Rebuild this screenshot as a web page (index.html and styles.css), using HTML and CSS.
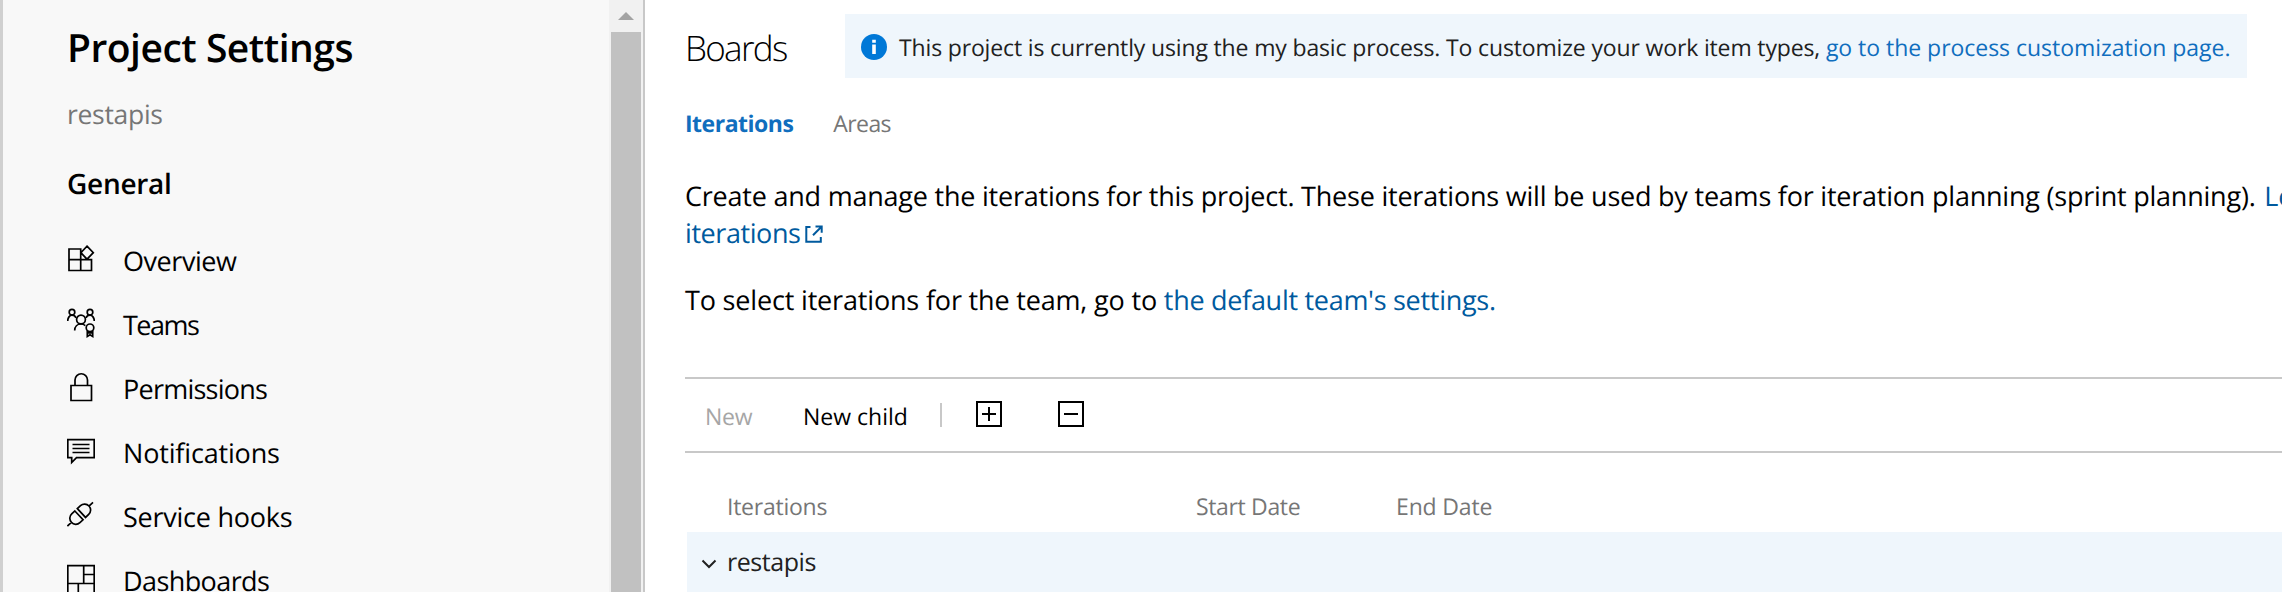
FILE: index.html
```html
<!DOCTYPE html>
<html lang="en">
<head>
<meta charset="utf-8">
<title>Project Settings - Boards</title>
<link rel="stylesheet" href="styles.css">
</head>
<body>
<div class="app">
  <aside class="sidebar">
    <h1 class="title">Project Settings</h1>
    <div class="project">restapis</div>
    <h2 class="group">General</h2>
    <nav class="nav">
      <a class="item overview">
        <svg class="icon" viewBox="0 0 28 32"><path d="M2 5h11.7v21.5H2zM2 15.7h22.5v10.8H13.7M20 2.2l6.3 6.5-6.3 6.5-6.1-6.5z"/></svg>
        <span>Overview</span></a>
      <a class="item teams">
        <svg class="icon" viewBox="0 0 28 32"><circle cx="5" cy="4.2" r="2.8"/><circle cx="23" cy="4.2" r="2.8"/><path d="M.7 13c0-3.300 2-5.800 4.300-5.800 1.800 0 3.300 1 4 2.600M27.300 13c0-3.300-2-5.800-4.300-5.800-1.800 0-3.300 1-4 2.600M7.700 22.500c0-3.800 2.600-6.500 6.300-6.500 1.700 0 3.200.6 4.300 1.600"/><circle cx="14" cy="11.500" r="4.400"/><circle cx="23" cy="19.800" r="3.800"/><path d="M20.300 22.500v6l2.700-1.800 2.700 1.800v-6M20.500 24.800h5"/></svg>
        <span>Teams</span></a>
      <a class="item permissions">
        <svg class="icon" viewBox="0 0 28 32"><path d="M4 13.500h20.500v15H4zM8 13.500V8a6.200 6.200 0 0 1 12.500 0v5.500"/></svg>
        <span>Permissions</span></a>
      <a class="item notifications">
        <svg class="icon" viewBox="0 0 28 32"><path d="M.8 3.700h26.400v18H9.500L4.700 26.500v-4.800H.8zM5.500 8.500h17M5.500 12.500h17M5.500 16.500h17"/></svg>
        <span>Notifications</span></a>
      <a class="item hooks">
        <svg class="icon" viewBox="0 0 28 32"><g transform="translate(13.200 14.200) rotate(-43)"><path d="M-1.700-6v12H-6a6 6 0 0 1 0-12zM1.700-6v12H6A6 6 0 0 0 6-6zM-17.500 0h5.500M12 0h5.500"/></g></svg>
        <span>Service hooks</span></a>
      <a class="item dashboards">
        <svg class="icon" viewBox="0 0 28 32"><path d="M.8 31V1.700h26.400V31M.8 19.500h26.400M16.700 1.700v17.800M16.700 10.500h10.500M11.300 19.500V31"/></svg>
        <span>Dashboards</span></a>
    </nav>
  </aside>
  <div class="scrollbar">
    <svg class="arrow" viewBox="0 0 16 8"><path d="M8 0l8 8H0z"/></svg>
    <div class="thumb"></div>
  </div>
  <main class="main">
    <header class="header">
      <h2 class="boards">Boards</h2>
      <div class="banner">
        <svg class="info" viewBox="0 0 26 26"><circle cx="13" cy="13" r="13"/><path d="M11.200 10.500h3.600V20h-3.600zM11.200 5.700h3.600v3h-3.600z"/></svg>
        <p class="banner-text">This project is currently using the my basic process. To customize your work item types, <a class="banner-link">go to the process customization page.</a></p>
      </div>
    </header>
    <div class="tabs"><a class="tab active">Iterations</a><a class="tab">Areas</a></div>
    <p class="copy intro"><span class="intro-text">Create and manage the iterations for this project. These iterations will be used by teams for iteration planning (sprint planning).</span> <a class="link">Learn</a><br><a class="link tight">iterations</a><svg class="external" viewBox="0 0 18 18"><path d="M5.500 2H1.300v14.700h14.500V12M10.500 1.500h6.200v6.300M16.200 2L8 10.200"/></svg></p>
    <p class="copy select">To select iterations for the team, go to <a class="link">the default team's settings.</a></p>
    <div class="toolbar">
      <span class="new">New</span>
      <span class="child">New child</span>
      <i class="separator"></i>
      <svg class="box" viewBox="0 0 26 26"><path d="M1 1h24v24H1zM6 13h14M13 6v14"/></svg>
      <svg class="box" viewBox="0 0 26 26"><path d="M1 1h24v24H1zM6 13h14"/></svg>
    </div>
    <div class="columns"><span class="col-name">Iterations</span><span class="col-start">Start Date</span><span class="col-end">End Date</span></div>
    <div class="row">
      <svg class="chevron" viewBox="0 0 16 10"><path d="M1.500 1.500L8 8l6.500-6.500"/></svg>
      <span>restapis</span>
    </div>
  </main>
</div>
</body>
</html>
```
FILE: styles.css
```css
* { box-sizing: border-box; margin: 0; padding: 0; }
body { font-family: "Open Sans", "Noto Sans", sans-serif; color: #000; background: #fff; overflow: hidden; text-rendering: geometricPrecision; }
.app { display: flex; height: 592px; overflow: hidden; white-space: nowrap; }

.sidebar { flex: none; width: 609px; height: 592px; overflow: hidden; padding: 24px 0 0 64px; background: #f8f8f8; border-left: 3px solid #d0d0d0; }
.title { height: 48px; line-height: 48px; font-size: 39px; font-weight: 600; letter-spacing: -0.5px; }
.project { margin-top: 22px; height: 40px; line-height: 40px; font-size: 26.5px; letter-spacing: -0.3px; color: #767676; }
.group { margin-top: 30px; height: 40px; line-height: 40px; font-size: 28px; font-weight: 600; letter-spacing: -0.28px; }
.nav { margin-top: 24px; }
.item { display: flex; align-items: center; gap: 28px; height: 64px; font-size: 27px; }
.item span { padding-top: 2px; line-height: 60px; }
.icon { flex: none; width: 28px; height: 32px; fill: none; stroke: #000; stroke-width: 1.7; }
.overview { letter-spacing: -0.45px; }
.teams { letter-spacing: -1.5px; }
.permissions { letter-spacing: -0.76px; }
.notifications { letter-spacing: -0.17px; }
.hooks { letter-spacing: -0.25px; }
.dashboards { letter-spacing: -0.59px; }

.scrollbar { flex: none; width: 36px; display: flex; flex-direction: column; align-items: flex-start; background: #f1f1f1; border-right: 2px solid #c8c8c8; }
.arrow { width: 16px; height: 8px; margin: 12px 0 12px 9px; fill: #a3a3a3; }
.thumb { flex: 1; width: 30px; margin-left: 2px; background: #c1c1c1; }

.main { flex: 1; min-width: 0; padding: 14px 0 0 40px; }
.header { display: flex; height: 64px; }
.boards { width: 160px; padding-top: 4px; line-height: 61px; font-size: 35px; font-weight: 300; letter-spacing: -1.7px; }
.banner { display: flex; align-items: center; gap: 12px; width: 1402px; height: 64px; padding: 2px 0 0 16px; background: #eff6fc; }
.info { flex: none; width: 26px; height: 26px; fill: #0078d7; }
.info path { fill: #fff; }
.banner-text { font-size: 23px; letter-spacing: -0.15px; color: #212121; }
.banner-link { letter-spacing: -0.03px; color: #106ebe; }

.tabs { display: flex; gap: 40px; margin-top: 30px; height: 30px; line-height: 30px; font-size: 23px; }
.tab { letter-spacing: -0.6px; color: #767676; }
.active { letter-spacing: -0.5px; font-weight: 700; color: #106ebe; }

.copy { line-height: 37px; font-size: 27px; letter-spacing: -0.2px; }
.intro { margin-top: 39px; height: 74px; overflow: hidden; }
.intro-text { letter-spacing: -0.22px; margin-right: 2px; }
.select { margin-top: 30px; letter-spacing: -0.17px; }
.link { letter-spacing: -0.29px; color: #005a9e; }
.tight { letter-spacing: -0.43px; }
.external { width: 18px; height: 18px; margin-left: 5px; fill: none; stroke: #005a9e; stroke-width: 2; }

.toolbar { display: flex; align-items: center; margin-top: 59px; height: 76px; padding-left: 20px; border-top: 2px solid #c8c8c8; border-bottom: 2px solid #c8c8c8; font-size: 23px; }
.new { width: 98px; padding-top: 2px; letter-spacing: -0.2px; color: #a6a6a6; }
.child { width: 137px; padding-top: 2px; }
.separator { width: 2px; height: 24px; margin-right: 34px; background: #c8c8c8; }
.box { width: 26px; height: 26px; margin: 0 56px 2px 0; fill: none; stroke: #000; stroke-width: 2; }

.columns { display: flex; margin-top: 38px; height: 41px; padding-left: 42px; line-height: 30px; font-size: 23px; color: #767676; }
.col-name { width: 469px; letter-spacing: -0.25px; }
.col-start { width: 200px; letter-spacing: -0.35px; }
.col-end { letter-spacing: -0.15px; }
.row { display: flex; align-items: center; gap: 10px; height: 60px; margin-left: 2px; padding-left: 14px; background: #eff6fc; font-size: 25px; letter-spacing: -0.45px; color: #212121; }
.chevron { width: 16px; height: 10px; margin-top: 4px; fill: none; stroke: #212121; stroke-width: 2; }
```
